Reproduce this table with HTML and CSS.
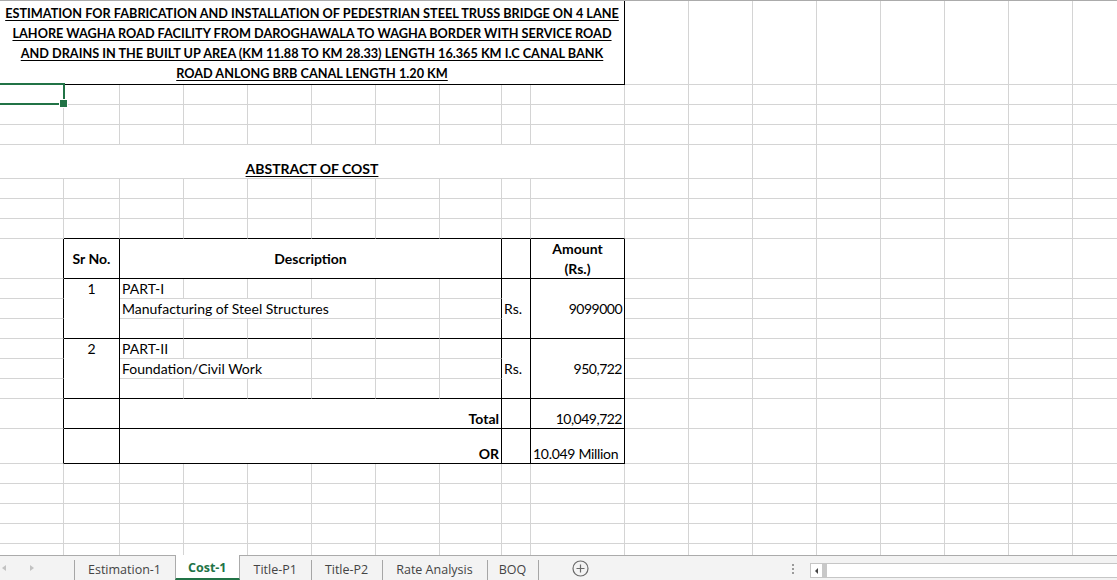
FILE: index.html
```html
<!DOCTYPE html>
<html>
<head>
<meta charset="utf-8">
<title>Cost-1</title>
<link rel="stylesheet" href="styles.css">
</head>
<body>
<div class="app">
  <div class="sheet">
    <!-- row 1 -->
    <div class="title c10 bb br"><span class="u">ESTIMATION FOR FABRICATION AND INSTALLATION OF PEDESTRIAN STEEL TRUSS BRIDGE ON 4 LANE<br>LAHORE WAGHA ROAD FACILITY FROM DAROGHAWALA TO WAGHA BORDER WITH SERVICE ROAD<br>AND DRAINS IN THE BUILT UP AREA (KM 11.88 TO KM 28.33) LENGTH 16.365 KM I.C CANAL BANK<br>ROAD ANLONG BRB CANAL LENGTH 1.20 KM</span></div>
    <div></div><div></div><div></div><div></div><div></div><div></div><div></div><div></div>
    <!-- row 2 -->
    <div class="sel"></div><div></div><div></div><div></div><div></div><div></div><div></div><div></div><div></div>
    <div></div><div></div><div></div><div></div><div></div><div></div><div></div><div></div><div></div>
    <!-- row 3 -->
    <div></div><div></div><div></div><div></div><div></div><div></div><div></div><div></div><div></div>
    <div></div><div></div><div></div><div></div><div></div><div></div><div></div><div></div><div></div>
    <!-- row 4 -->
    <div></div><div></div><div></div><div></div><div></div><div></div><div></div><div></div><div></div>
    <div></div><div></div><div></div><div></div><div></div><div></div><div></div><div></div><div></div>
    <!-- row 5 -->
    <div class="c10 ctr b"><span class="u">ABSTRACT OF COST</span></div>
    <div></div><div></div><div></div><div></div><div></div><div></div><div></div><div></div>
    <!-- row 6 -->
    <div></div><div></div><div></div><div></div><div></div><div></div><div></div><div></div><div></div>
    <div></div><div></div><div></div><div></div><div></div><div></div><div></div><div></div><div></div>
    <!-- row 7 -->
    <div></div><div></div><div></div><div></div><div></div><div></div><div></div><div></div><div></div>
    <div></div><div></div><div></div><div></div><div></div><div></div><div></div><div></div><div></div>
    <!-- row 8 -->
    <div></div><div class="bb"></div><div class="bb"></div><div class="bb"></div><div class="bb"></div><div class="bb"></div><div class="bb"></div><div class="bb"></div><div class="bb"></div><div class="bb"></div>
    <div></div><div></div><div></div><div></div><div></div><div></div><div></div><div></div>
    <!-- row 9 : header -->
    <div class="br"></div>
    <div class="br bb ctr mid b">Sr No.</div>
    <div class="c6 br bb ctr mid b">Description</div>
    <div class="br bb"></div>
    <div class="br bb ctr mid b two">Amount<br>(Rs.)</div>
    <div></div><div></div><div></div><div></div><div></div><div></div><div></div><div></div>
    <!-- row 10 -->
    <div class="br"></div>
    <div class="r3 br bb ctr top">1</div>
    <div>PART-I</div><div></div><div></div><div></div><div></div><div class="br"></div>
    <div class="r3 br bb mid">Rs.</div>
    <div class="r3 br bb mid rt num">9099000</div>
    <div></div><div></div><div></div><div></div><div></div><div></div><div></div><div></div>
    <!-- row 11 -->
    <div class="br"></div>
    <div class="c4">Manufacturing of Steel Structures</div><div></div><div class="br"></div>
    <div></div><div></div><div></div><div></div><div></div><div></div><div></div><div></div>
    <!-- row 12 -->
    <div class="br"></div>
    <div class="bb"></div><div class="bb"></div><div class="bb"></div><div class="bb"></div><div class="bb"></div><div class="br bb"></div>
    <div></div><div></div><div></div><div></div><div></div><div></div><div></div><div></div>
    <!-- row 13 -->
    <div class="br"></div>
    <div class="r3 br bb ctr top">2</div>
    <div>PART-II</div><div></div><div></div><div></div><div></div><div class="br"></div>
    <div class="r3 br bb mid">Rs.</div>
    <div class="r3 br bb mid rt num">950,722</div>
    <div></div><div></div><div></div><div></div><div></div><div></div><div></div><div></div>
    <!-- row 14 -->
    <div class="br"></div>
    <div class="c3">Foundation/Civil Work</div><div></div><div></div><div class="br"></div>
    <div></div><div></div><div></div><div></div><div></div><div></div><div></div><div></div>
    <!-- row 15 -->
    <div class="br"></div>
    <div class="bb"></div><div class="bb"></div><div class="bb"></div><div class="bb"></div><div class="bb"></div><div class="br bb"></div>
    <div></div><div></div><div></div><div></div><div></div><div></div><div></div><div></div>
    <!-- row 16 -->
    <div class="br"></div>
    <div class="br bb"></div>
    <div class="c6 br bb rt b">Total</div>
    <div class="br bb"></div>
    <div class="br bb rt num">10,049,722</div>
    <div></div><div></div><div></div><div></div><div></div><div></div><div></div><div></div>
    <!-- row 17 -->
    <div class="br"></div>
    <div class="br bb"></div>
    <div class="c6 br bb rt b">OR</div>
    <div class="br bb"></div>
    <div class="br bb mil">10.049 Million</div>
    <div></div><div></div><div></div><div></div><div></div><div></div><div></div><div></div>
    <!-- row 18 -->
    <div></div><div></div><div></div><div></div><div></div><div></div><div></div><div></div><div></div>
    <div></div><div></div><div></div><div></div><div></div><div></div><div></div><div></div><div></div>
    <!-- row 19 -->
    <div></div><div></div><div></div><div></div><div></div><div></div><div></div><div></div><div></div>
    <div></div><div></div><div></div><div></div><div></div><div></div><div></div><div></div><div></div>
    <!-- row 20 -->
    <div></div><div></div><div></div><div></div><div></div><div></div><div></div><div></div><div></div>
    <div></div><div></div><div></div><div></div><div></div><div></div><div></div><div></div><div></div>
    <!-- row 21 -->
    <div></div><div></div><div></div><div></div><div></div><div></div><div></div><div></div><div></div>
    <div></div><div></div><div></div><div></div><div></div><div></div><div></div><div></div><div></div>
    <!-- row 22 -->
    <div></div><div></div><div></div><div></div><div></div><div></div><div></div><div></div><div></div>
    <div></div><div></div><div></div><div></div><div></div><div></div><div></div><div></div><div></div>
  </div>

  <div class="tabbar">
    <div class="tabsarea">
      <div class="nav"><span class="tri-l"></span><span class="tri-r"></span></div>
      <div class="tab">Estimation-1</div>
      <div class="tab active">Cost-1</div>
      <div class="tab">Title-P1</div>
      <div class="tab">Title-P2</div>
      <div class="tab">Rate Analysis</div>
      <div class="tab narrow">BOQ</div>
      <div class="add">
        <svg width="17" height="17" viewBox="0 0 17 17"><circle cx="8.5" cy="8.5" r="7.5" fill="none" stroke="#6b6b6b" stroke-width="1.2"/><path d="M8.5 4.5v8M4.5 8.5h8" stroke="#6b6b6b" stroke-width="1.2"/></svg>
      </div>
    </div>
    <div class="splitter"><i></i><i></i><i></i></div>
    <div class="hscroll"><span class="hs-btn"><span class="tri-d"></span></span><span class="hs-track"></span><span class="hs-thumb"></span></div>
  </div>
</div>
</body>
</html>
```

FILE: styles.css
```css
* { box-sizing: border-box; margin: 0; padding: 0; }
html, body { width: 1117px; height: 580px; overflow: hidden; background: #fff; }
body { font-family: Lato, "Liberation Sans", sans-serif; color: #000; }

.app { display: flex; flex-direction: column; height: 580px; }

/* ---------- worksheet grid ---------- */
.sheet {
  height: 555px;
  overflow: hidden;
  border-top: 1px solid #ababab;
  display: grid;
  grid-template-columns: 64px 56px repeat(5, 64px) 62px 29px 94px repeat(8, 64px);
  grid-template-rows: 84px 20px 20px 20px 34px 20px 20px 20px 40px repeat(6, 20px) 30px 35px repeat(5, 20px);
  font-size: 14px;
}
.sheet > div {
  border-right: 1px solid #d4d4d4;
  border-bottom: 1px solid #d4d4d4;
  display: flex;
  align-items: flex-end;
  line-height: 18px;
  padding: 0 2px;
  white-space: nowrap;
  min-width: 0;
}
.sheet > .bb { border-bottom-color: #000; }
.sheet > .br { border-right-color: #000; }

.c3 { grid-column: span 3; }
.c4 { grid-column: span 4; }
.c6 { grid-column: span 6; }
.c10 { grid-column: span 10; }
.r3 { grid-row: span 3; }

.sheet > .ctr { justify-content: center; text-align: center; }
.sheet > .rt { justify-content: flex-end; }
.sheet > .mid { align-items: center; }
.sheet > .top { align-items: flex-start; padding-top: 1px; }
.b { font-weight: 700; }
.u { text-decoration: underline; text-underline-offset: 2px; text-decoration-thickness: 1px; }
.sheet > .two { line-height: 20px; }
.num { letter-spacing: -0.5px; }
.mil { letter-spacing: -0.3px; }

.sheet > .title {
  justify-content: center;
  text-align: center;
  font-weight: 700;
  font-size: 12.7px;
  line-height: 20px;
  padding-bottom: 1px;
}

/* selected cell */
.sheet > .sel { position: relative; }
.sel::before {
  content: "";
  position: absolute;
  left: -2px; top: -2px; right: -2px; bottom: -1px;
  border: 2px solid #217346;
}
.sel::after {
  content: "";
  position: absolute;
  right: -5px; bottom: -4px;
  width: 7px; height: 7px;
  background: #217346;
  border: 1px solid #fff;
}

/* ---------- sheet tab bar ---------- */
.tabbar {
  flex: 1;
  display: flex;
  background: #f3f3f3;
  border-top: 1px solid #ababab;
  font-family: "Open Sans", "Noto Sans", sans-serif;
  font-size: 12.5px;
  color: #444;
}
.tabsarea { width: 786px; display: flex; align-items: stretch; }
.nav { width: 74px; display: flex; align-items: center; padding-left: 2px; gap: 24px; }
.tri-l { width: 0; height: 0; border-top: 3px solid transparent; border-bottom: 3px solid transparent; border-right: 4px solid #c2c2c2; }
.tri-r { width: 0; height: 0; border-top: 3px solid transparent; border-bottom: 3px solid transparent; border-left: 4px solid #c2c2c2; }

.tab {
  position: relative;
  display: flex;
  align-items: center;
  padding: 2px 14px 0 14px;
}
.tab.narrow { padding: 2px 12px 0 12px; }
.tab::before {
  content: "";
  position: absolute;
  left: 0; top: 4px; bottom: 0;
  width: 1px;
  background: #a6a6a6;
}
.tab:nth-last-child(2)::after {
  content: "";
  position: absolute;
  right: -1px; top: 4px; bottom: 0;
  width: 1px;
  background: #a6a6a6;
}
.tab.active::before, .tab.active + .tab::before { display: none; }
.tab.active {
  margin-top: -1px;
  background: #fff;
  color: #217346;
  font-weight: 700;
  border-left: 1px solid #ababab;
  border-right: 1px solid #ababab;
  border-bottom: 2px solid #217346;
  padding: 2px 12px 0 12px;
}
.add { display: flex; align-items: center; margin-left: 34px; padding-top: 1px; }
.add svg { display: block; }

.splitter { width: 14px; display: flex; flex-direction: column; align-items: center; justify-content: center; gap: 2px; padding-top: 1px; }
.splitter i { display: block; width: 2px; height: 2px; background: #9a9a9a; }

.hscroll {
  flex: 1;
  margin: 7px -10px 2px 10px;
  height: 15px;
  border: 1px solid #c6c6c6;
  background: #fff;
  display: flex;
}
.hs-btn { width: 11px; display: flex; align-items: center; justify-content: center; }
.tri-d { width: 0; height: 0; border-top: 3px solid transparent; border-bottom: 3px solid transparent; border-right: 3px solid #444; }
.hs-track { width: 5px; background: #c8c8c8; }
.hs-thumb { flex: 1; }
```
